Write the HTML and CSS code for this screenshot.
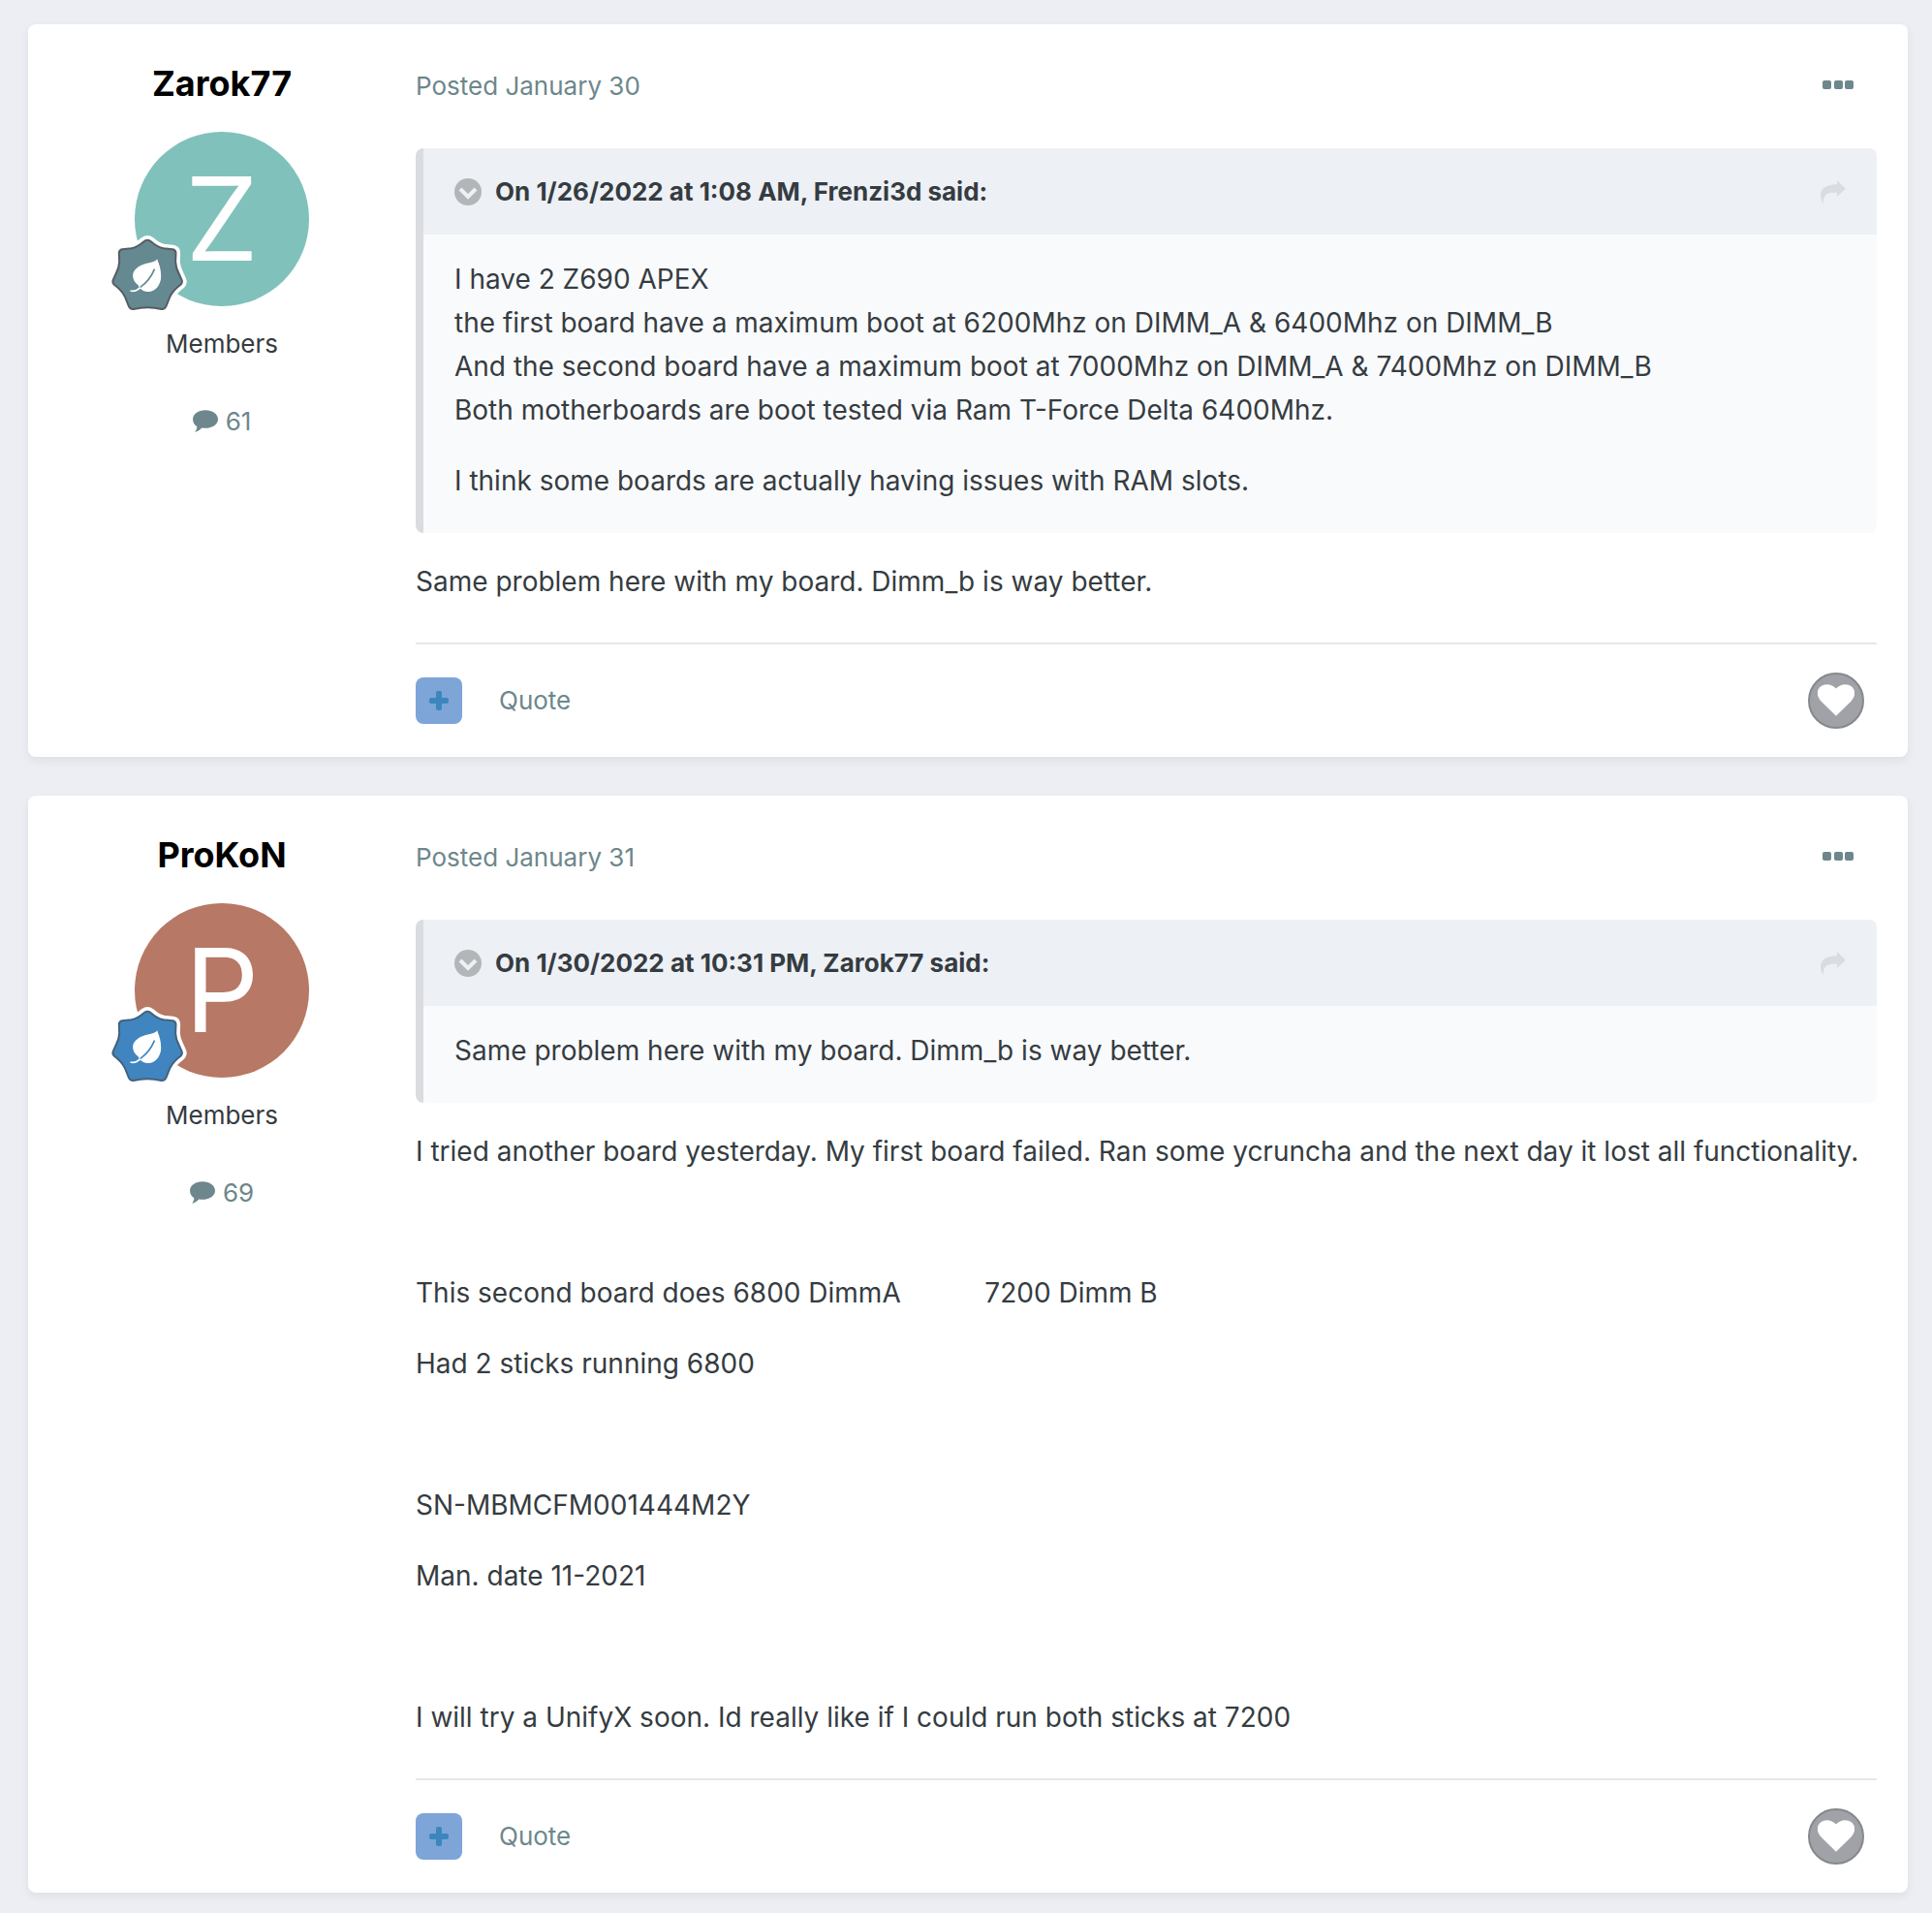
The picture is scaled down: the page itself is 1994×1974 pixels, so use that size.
FILE: index.html
```html
<!DOCTYPE html>
<html lang="en">
<head>
    <meta charset="UTF-8">
    <meta name="viewport" content="width=device-width, initial-scale=1.0">
    <title>Forum topic</title>
    <link rel="stylesheet" href="styles.css">
</head>
<body>

    <!-- shared icons -->
    <svg class="sprite" aria-hidden="true">
        <symbol id="leaf-badge" viewBox="0 0 245 240">
            <path class="badge-halo" d="M110 21Q120 14 130 21Q150 39 170 43L198 46Q208 48 208 58L207 85Q208 103 217 120L226 140Q230 149 222 156Q200 172 190 192L178 222Q174 232 163 231Q120 220 77 231Q66 232 62 222L50 192Q40 172 18 156Q10 149 14 140L23 120Q32 103 33 85L32 58Q32 48 42 46L70 43Q90 39 110 21Z"/>
            <path class="badge-shape" d="M110 21Q120 14 130 21Q150 39 170 43L198 46Q208 48 208 58L207 85Q208 103 217 120L226 140Q230 149 222 156Q200 172 190 192L178 222Q174 232 163 231Q120 220 77 231Q66 232 62 222L50 192Q40 172 18 156Q10 149 14 140L23 120Q32 103 33 85L32 58Q32 48 42 46L70 43Q90 39 110 21Z"/>
            <path class="leaf" d="M150 76C143 87 127 86 108 92C88 99 74 112 75 128C76 142 82 149 91 156C96 169 108 178 126 177C146 175 161 156 162 132C163 111 157 94 150 76Z"/>
            <path class="leaf-vein" d="M142 107C133 129 117 150 97 164"/>
            <path class="leaf-stem" d="M67 174C80 178 91 171 98 164"/>
        </symbol>
        <symbol id="comment" viewBox="0 0 78 68">
            <path d="M39 0C61 0 78 12 78 28S61 56 39 56C35 56 31 56 28 55C22 62 15 66 6 68C10 63 13 58 13 51C5 46 0 38 0 28C0 12 17 0 39 0Z"/>
        </symbol>
        <symbol id="chevron" viewBox="0 0 28 28">
            <circle cx="14" cy="14" r="14"/>
            <path fill="none" stroke="#edf0f5" stroke-width="4" d="M6 11L14 19L22 11"/>
        </symbol>
        <symbol id="share" viewBox="0 0 78 72">
            <path d="M51 0L78 26L51 51V38H42C20 38 8 45 8 72C4 66 0 58 0 47C0 25 18 13 51 13Z"/>
        </symbol>
        <symbol id="dots" viewBox="0 0 32 10">
            <rect width="9" height="9" rx="2"/>
            <rect x="12" width="9" height="9" rx="2"/>
            <rect x="23" width="9" height="9" rx="2"/>
        </symbol>
        <symbol id="plus" viewBox="0 0 20 20">
            <path d="M9 0H11Q13 0 13 2V7H18Q20 7 20 9V11Q20 13 18 13H13V18Q13 20 11 20H9Q7 20 7 18V13H2Q0 13 0 11V9Q0 7 2 7H7V2Q7 0 9 0Z"/>
        </symbol>
        <symbol id="heart" viewBox="0 0 114 98">
            <path d="M57 98L11 53C-5 36-3 17 9 7C25-5 45 0 57 13C69 0 89-5 105 7C117 17 119 36 103 53Z"/>
        </symbol>
    </svg>

    <main class="topic">
        <article class="post">
            <aside class="author">
                <h3 class="author-name"><a href="#">Zarok77</a></h3>
                <div class="avatar avatar-teal">Z
                    <svg class="rank rank-gray"><use href="#leaf-badge"/></svg>
                </div>
                <div class="group">Members</div>
                <a class="post-count" href="#"><svg><use href="#comment"/></svg>61</a>
            </aside>
            <div class="content">
                <header class="post-header">
                    <a href="#">Posted January 30</a>
                    <button class="menu-button" aria-label="More options"><svg><use href="#dots"/></svg></button>
                </header>
                <div class="post-text">
                    <blockquote class="quote">
                        <div class="quote-header">
                            <button class="quote-toggle" aria-label="Toggle quote"><svg><use href="#chevron"/></svg></button>
                            <span>On 1/26/2022 at 1:08 AM, Frenzi3d said:</span>
                            <a class="quote-link" href="#" aria-label="Go to post"><svg><use href="#share"/></svg></a>
                        </div>
                        <div class="quote-body">
                            <p>I have 2 Z690 APEX<br>
                            the first board have a maximum boot at 6200Mhz on DIMM_A &amp; 6400Mhz on DIMM_B<br>
                            And the second board have a maximum boot at 7000Mhz on DIMM_A &amp; 7400Mhz on DIMM_B<br>
                            Both motherboards are boot tested via Ram T-Force Delta 6400Mhz.</p>
                            <p>I think some boards are actually having issues with RAM slots.</p>
                        </div>
                    </blockquote>
                    <p>Same problem here with my board. Dimm_b is way better.</p>
                </div>
                <footer class="post-footer">
                    <button class="multiquote" aria-label="Multi-quote"><svg><use href="#plus"/></svg></button>
                    <a href="#">Quote</a>
                    <button class="react" aria-label="Like"><svg><use href="#heart"/></svg></button>
                </footer>
            </div>
        </article>

        <article class="post">
            <aside class="author">
                <h3 class="author-name"><a href="#">ProKoN</a></h3>
                <div class="avatar avatar-brown">P
                    <svg class="rank rank-blue"><use href="#leaf-badge"/></svg>
                </div>
                <div class="group">Members</div>
                <a class="post-count" href="#"><svg><use href="#comment"/></svg>69</a>
            </aside>
            <div class="content">
                <header class="post-header">
                    <a href="#">Posted January 31</a>
                    <button class="menu-button" aria-label="More options"><svg><use href="#dots"/></svg></button>
                </header>
                <div class="post-text">
                    <blockquote class="quote">
                        <div class="quote-header">
                            <button class="quote-toggle" aria-label="Toggle quote"><svg><use href="#chevron"/></svg></button>
                            <span>On 1/30/2022 at 10:31 PM, Zarok77 said:</span>
                            <a class="quote-link" href="#" aria-label="Go to post"><svg><use href="#share"/></svg></a>
                        </div>
                        <div class="quote-body">
                            <p>Same problem here with my board. Dimm_b is way better.</p>
                        </div>
                    </blockquote>
                    <p>I tried another board yesterday. My first board failed. Ran some ycruncha and the next day it lost all functionality.</p>
                    <p>&nbsp;</p>
                    <p>This second board does 6800 DimmA&nbsp;&nbsp;&nbsp;&nbsp;&nbsp;&nbsp;&nbsp;&nbsp;&nbsp;&nbsp; 7200 Dimm B</p>
                    <p>Had 2 sticks running 6800</p>
                    <p>&nbsp;</p>
                    <p>SN-MBMCFM001444M2Y</p>
                    <p>Man. date 11-2021</p>
                    <p>&nbsp;</p>
                    <p>I will try a UnifyX soon. Id really like if I could run both sticks at 7200</p>
                </div>
                <footer class="post-footer">
                    <button class="multiquote" aria-label="Multi-quote"><svg><use href="#plus"/></svg></button>
                    <a href="#">Quote</a>
                    <button class="react" aria-label="Like"><svg><use href="#heart"/></svg></button>
                </footer>
            </div>
        </article>
    </main>

</body>
</html>
```
FILE: styles.css
```css
* {
    box-sizing: border-box;
}

body {
    margin: 0;
    background-color: #edeef3;
    color: #353c41;
    font-family: Inter, "Liberation Sans", sans-serif;
    font-size: 28px;
    line-height: 45px;
}

a {
    color: inherit;
    text-decoration: none;
}

button {
    display: flex;
    align-items: center;
    justify-content: center;
    padding: 0;
    border: 0;
    background: none;
    cursor: pointer;
}

svg {
    display: block;
    fill: currentColor;
}

.sprite {
    position: absolute;
    width: 0;
    height: 0;
}

.topic {
    display: flex;
    flex-direction: column;
    gap: 40px;
    padding: 25px 25px 20px 29px;
}

.post {
    display: grid;
    grid-template-columns: 400px 1fr;
    padding-right: 32px;
    background-color: #fff;
    border-radius: 8px;
    box-shadow: 0 4px 8px rgba(50, 60, 70, 0.08);
}

/* author column */
.author {
    display: flex;
    flex-direction: column;
    align-items: center;
    padding-top: 36px;
    font-size: 26px;
}

.author-name {
    margin: 0 0 25px;
    font-size: 36px;
    line-height: 50px;
    font-weight: 700;
    color: #000;
}

.avatar {
    position: relative;
    width: 180px;
    height: 180px;
    margin-bottom: 16px;
    border-radius: 50%;
    color: #fff;
    font-size: 120px;
    line-height: 180px;
    text-align: center;
}

.avatar-teal {
    background-color: #80c1bb;
}

.avatar-brown {
    background-color: #b77865;
}

.rank {
    position: absolute;
    left: -27px;
    top: 106px;
    width: 82px;
    height: 80px;
}

.rank-gray {
    color: #648990;
    stroke: #555d63;
}

.rank-blue {
    color: #4085bf;
    stroke: #43627c;
}

.badge-halo {
    stroke: #fff;
    stroke-width: 28;
}

.badge-shape {
    stroke-width: 6;
}

.leaf {
    fill: #fff;
    stroke: none;
}

.leaf-vein {
    fill: none;
    stroke: currentColor;
    stroke-width: 5;
}

.leaf-stem {
    fill: none;
    stroke: #fff;
    stroke-width: 5;
}

.group {
    margin-bottom: 35px;
}

.post-count {
    display: flex;
    align-items: center;
    gap: 8px;
    color: #6d878c;
}

.post-count svg {
    width: 26px;
    height: 23px;
}

/* post body */
.content {
    min-width: 0;
}

.post-header {
    display: flex;
    align-items: center;
    justify-content: space-between;
    height: 128px;
    padding-bottom: 2px;
    color: #6d878c;
    font-size: 26px;
}

.menu-button {
    width: 80px;
    height: 40px;
    color: #6d878c;
}

.menu-button svg {
    width: 32px;
    height: 10px;
}

.post-text {
    padding-bottom: 40px;
    border-bottom: 2px solid #e6e7ed;
}

.post-text p {
    margin: 28px 0 0;
}

.quote {
    margin: 0;
    overflow: hidden;
    background-color: #f9fafc;
    border-left: 8px solid #dadce0;
    border-radius: 8px;
}

.quote-header {
    display: flex;
    align-items: center;
    gap: 14px;
    padding: 22px 32px;
    background-color: #edf0f5;
    font-weight: 700;
    font-size: 26px;
}

.quote-toggle {
    color: #b3b6b9;
}

.quote-toggle svg {
    width: 28px;
    height: 28px;
}

.quote-link {
    margin-left: auto;
    color: #dadce0;
}

.quote-link svg {
    width: 26px;
    height: 24px;
}

.quote-body {
    padding: 24px 32px 31px;
}

.quote-body p:first-child {
    margin-top: 0;
}

.post-footer {
    display: flex;
    align-items: center;
    height: 116px;
    padding-right: 13px;
    padding-bottom: 1px;
    color: #6d878c;
    font-size: 26px;
}

.multiquote {
    width: 48px;
    height: 48px;
    margin-right: 38px;
    border-radius: 8px;
    background-color: #7da5d8;
    color: #3d86bd;
}

.multiquote svg {
    width: 20px;
    height: 20px;
}

.react {
    width: 58px;
    height: 58px;
    margin-left: auto;
    border: 2px solid #85898e;
    border-radius: 50%;
    background-color: #a0a2a7;
    color: #fff;
}

.react svg {
    width: 38px;
    height: 33px;
}
```
